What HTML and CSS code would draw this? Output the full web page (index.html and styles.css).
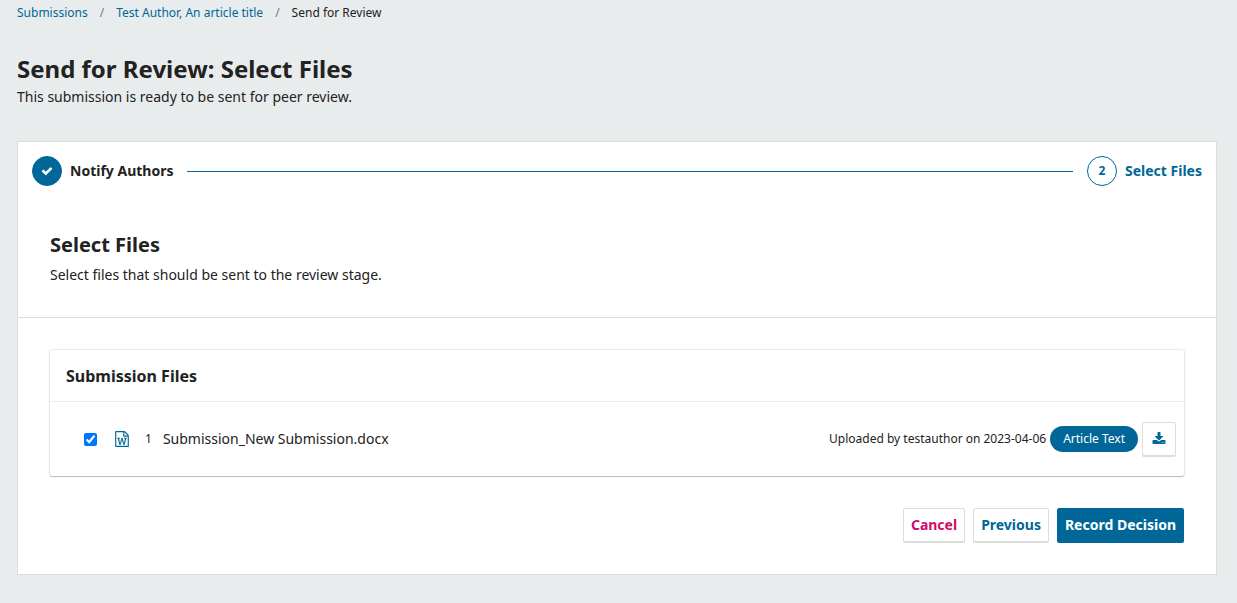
FILE: index.html
```html
<!DOCTYPE html>
<html lang="en">
<head>
<meta charset="utf-8">
<title>Send for Review: Select Files</title>
<link rel="stylesheet" href="styles.css">
</head>
<body>
<main class="page">
  <nav aria-label="Breadcrumb">
    <ol class="breadcrumbs">
      <li><a href="#">Submissions</a></li>
      <li><a href="#">Test Author, An article title</a></li>
      <li aria-current="page">Send for Review</li>
    </ol>
  </nav>
  <header class="page-header">
    <h1>Send for Review: Select Files</h1>
    <p>This submission is ready to be sent for peer review.</p>
  </header>
  <div class="decision">
    <ol class="steps">
      <li class="step">
        <span class="step-marker step-marker-done"><svg class="icon-check" viewBox="0 0 1792 1792" aria-hidden="true"><path d="M1671 566q0 40-28 68l-724 724-136 136q-28 28-68 28t-68-28l-136-136-362-362q-28-28-28-68t28-68l136-136q28-28 68-28t68 28l294 295 656-657q28-28 68-28t68 28l136 136q28 28 28 68z"/></svg></span>
        <span class="step-label">Notify Authors</span>
      </li>
      <li class="step-line" aria-hidden="true"></li>
      <li class="step step-current" aria-current="step">
        <span class="step-marker">2</span>
        <span class="step-label">Select Files</span>
      </li>
    </ol>
    <section class="intro">
      <h2>Select Files</h2>
      <p>Select files that should be sent to the review stage.</p>
    </section>
    <section class="body">
      <div class="files">
        <h3>Submission Files</h3>
        <div class="file">
          <input class="file-check" type="checkbox" id="file-1" checked>
          <label class="file-label" for="file-1">
            <svg class="icon-word" viewBox="128 0 1536 1792" aria-hidden="true"><path d="M1596 380q28 28 48 76t20 88v1152q0 40-28 68t-68 28h-1344q-40 0-68-28t-28-68v-1600q0-40 28-68t68-28h896q40 0 88 20t76 48zm-444-244v376h376q-10-29-22-41l-313-313q-12-12-41-22zm384 1528v-1024h-416q-40 0-68-28t-28-68v-416h-768v1536h1280zm-1175-896v107h70l164 661h159l128-485q7-20 10-46 2-16 2-24h4l3 24q1 3 3.500 20t5.500 26l128 485h159l164-661h70v-107h-300v107h90l-99 438q-5 20-7 46l-2 21h-4l-3-21q-1-5-4-21t-5-25l-144-545h-114l-144 545q-2 9-4.500 24.500t-3.500 21.500l-4 21h-4l-2-21q-2-26-7-46l-99-438h90v-107h-300z"/></svg>
            <span class="file-id">1</span>
            <span class="file-name">Submission_New Submission.docx</span>
          </label>
          <span class="file-date">Uploaded by testauthor on 2023-04-06</span>
          <span class="badge">Article Text</span>
          <button class="button button-icon" type="button" aria-label="Download"><svg class="icon-download" viewBox="0 0 1792 1792" aria-hidden="true"><path d="M1344 1344q0-26-19-45t-45-19-45 19-19 45 19 45 45 19 45-19 19-45zm256 0q0-26-19-45t-45-19-45 19-19 45 19 45 45 19 45-19 19-45zm128-224v320q0 40-28 68t-68 28h-1472q-40 0-68-28t-28-68v-320q0-40 28-68t68-28h465l135 136q58 56 136 56t136-56l136-136h464q40 0 68 28t28 68zm-325-569q17 41-14 70l-448 448q-18 19-45 19t-45-19l-448-448q-31-29-14-70 17-39 59-39h256v-448q0-26 19-45t45-19h256q26 0 45 19t19 45v448h256q42 0 59 39z"/></svg></button>
        </div>
      </div>
      <div class="actions">
        <button class="button button-cancel" type="button">Cancel</button>
        <button class="button" type="button">Previous</button>
        <button class="button button-primary" type="button">Record Decision</button>
      </div>
    </section>
  </div>
</main>
</body>
</html>
```
FILE: styles.css
```css
* {
  box-sizing: border-box;
}

body {
  margin: 0;
  background: #e9eced;
  color: #222;
  font-family: "Noto Sans", "Open Sans", sans-serif;
  font-size: 14px;
  line-height: 20px;
}

h1, h2, h3, p, ol {
  margin: 0;
  padding: 0;
}

ol {
  list-style: none;
}

svg {
  display: block;
  fill: currentColor;
}

.page {
  padding: 3px 20px 28px 17px;
}

.breadcrumbs {
  display: flex;
  font-size: 12px;
}

.breadcrumbs li + li::before {
  content: "/";
  padding: 0 12px;
  color: #777;
}

.breadcrumbs a {
  color: #006798;
  text-decoration: none;
}

.page-header {
  padding: 30px 0 34px;
}

.page-header h1 {
  margin-bottom: 2px;
  font-size: 24px;
  line-height: 32px;
}

.decision {
  background: #fff;
  border: 1px solid #ddd;
}

.steps {
  display: flex;
  align-items: center;
  gap: 14px;
  padding: 14px;
}

.step {
  display: flex;
  align-items: center;
  gap: 8px;
  font-weight: 700;
}

.step-current {
  color: #006798;
}

.step-marker {
  display: flex;
  align-items: center;
  justify-content: center;
  width: 30px;
  height: 30px;
  border: 1px solid #006798;
  border-radius: 50%;
  font-size: 12px;
}

.step-marker-done {
  background: #006798;
  color: #fff;
}

.icon-check {
  width: 12px;
  height: 12px;
}

.step-line {
  flex: 1;
  height: 1px;
  background: #006798;
}

.intro {
  padding: 33px 32px 32px;
  border-bottom: 1px solid #ddd;
}

.intro h2 {
  margin-bottom: 8px;
  font-size: 20px;
  line-height: 24px;
}

.body {
  padding: 32px;
}

.files {
  border-radius: 2px;
  box-shadow: 0 0 2px rgba(0, 0, 0, 0.3), 0 1px 1px rgba(0, 0, 0, 0.2);
}

.files h3 {
  padding: 16px 16px 15px;
  border-bottom: 1px solid #eee;
  font-size: 16px;
  line-height: 20px;
}

.file {
  display: flex;
  align-items: center;
  gap: 4px;
  padding: 20px 8px 20px 34px;
}

.file-check {
  width: 13px;
  height: 13px;
  margin: 0;
  accent-color: #0075ff;
}

.file-label {
  display: flex;
  flex: 1;
  align-items: center;
  padding-left: 14px;
}

.icon-word {
  width: 14px;
  height: 16px;
  color: #006798;
}

.file-id {
  padding: 0 11px 0 16px;
  font-size: 12px;
}

.file-date {
  font-size: 12px;
}

.badge {
  padding: 3px 13px;
  border-radius: 13px;
  background: #006798;
  color: #fff;
  font-size: 12px;
}

.actions {
  display: flex;
  justify-content: flex-end;
  gap: 8px;
  padding-top: 32px;
}

.button {
  height: 34px;
  padding: 0 7px;
  border: 1px solid #ddd;
  border-radius: 2px;
  background: #fff;
  box-shadow: 0 1px 0 #ddd;
  color: #006798;
  font: inherit;
  font-weight: 700;
}

.button-icon {
  width: 34px;
}

.icon-download {
  width: 14px;
  height: 14px;
  margin: 0 auto;
}

.button-cancel {
  color: #d00a6c;
}

.button-primary {
  border-color: #006798;
  background: #006798;
  box-shadow: 0 1px 0 #006798;
  color: #fff;
}
```
